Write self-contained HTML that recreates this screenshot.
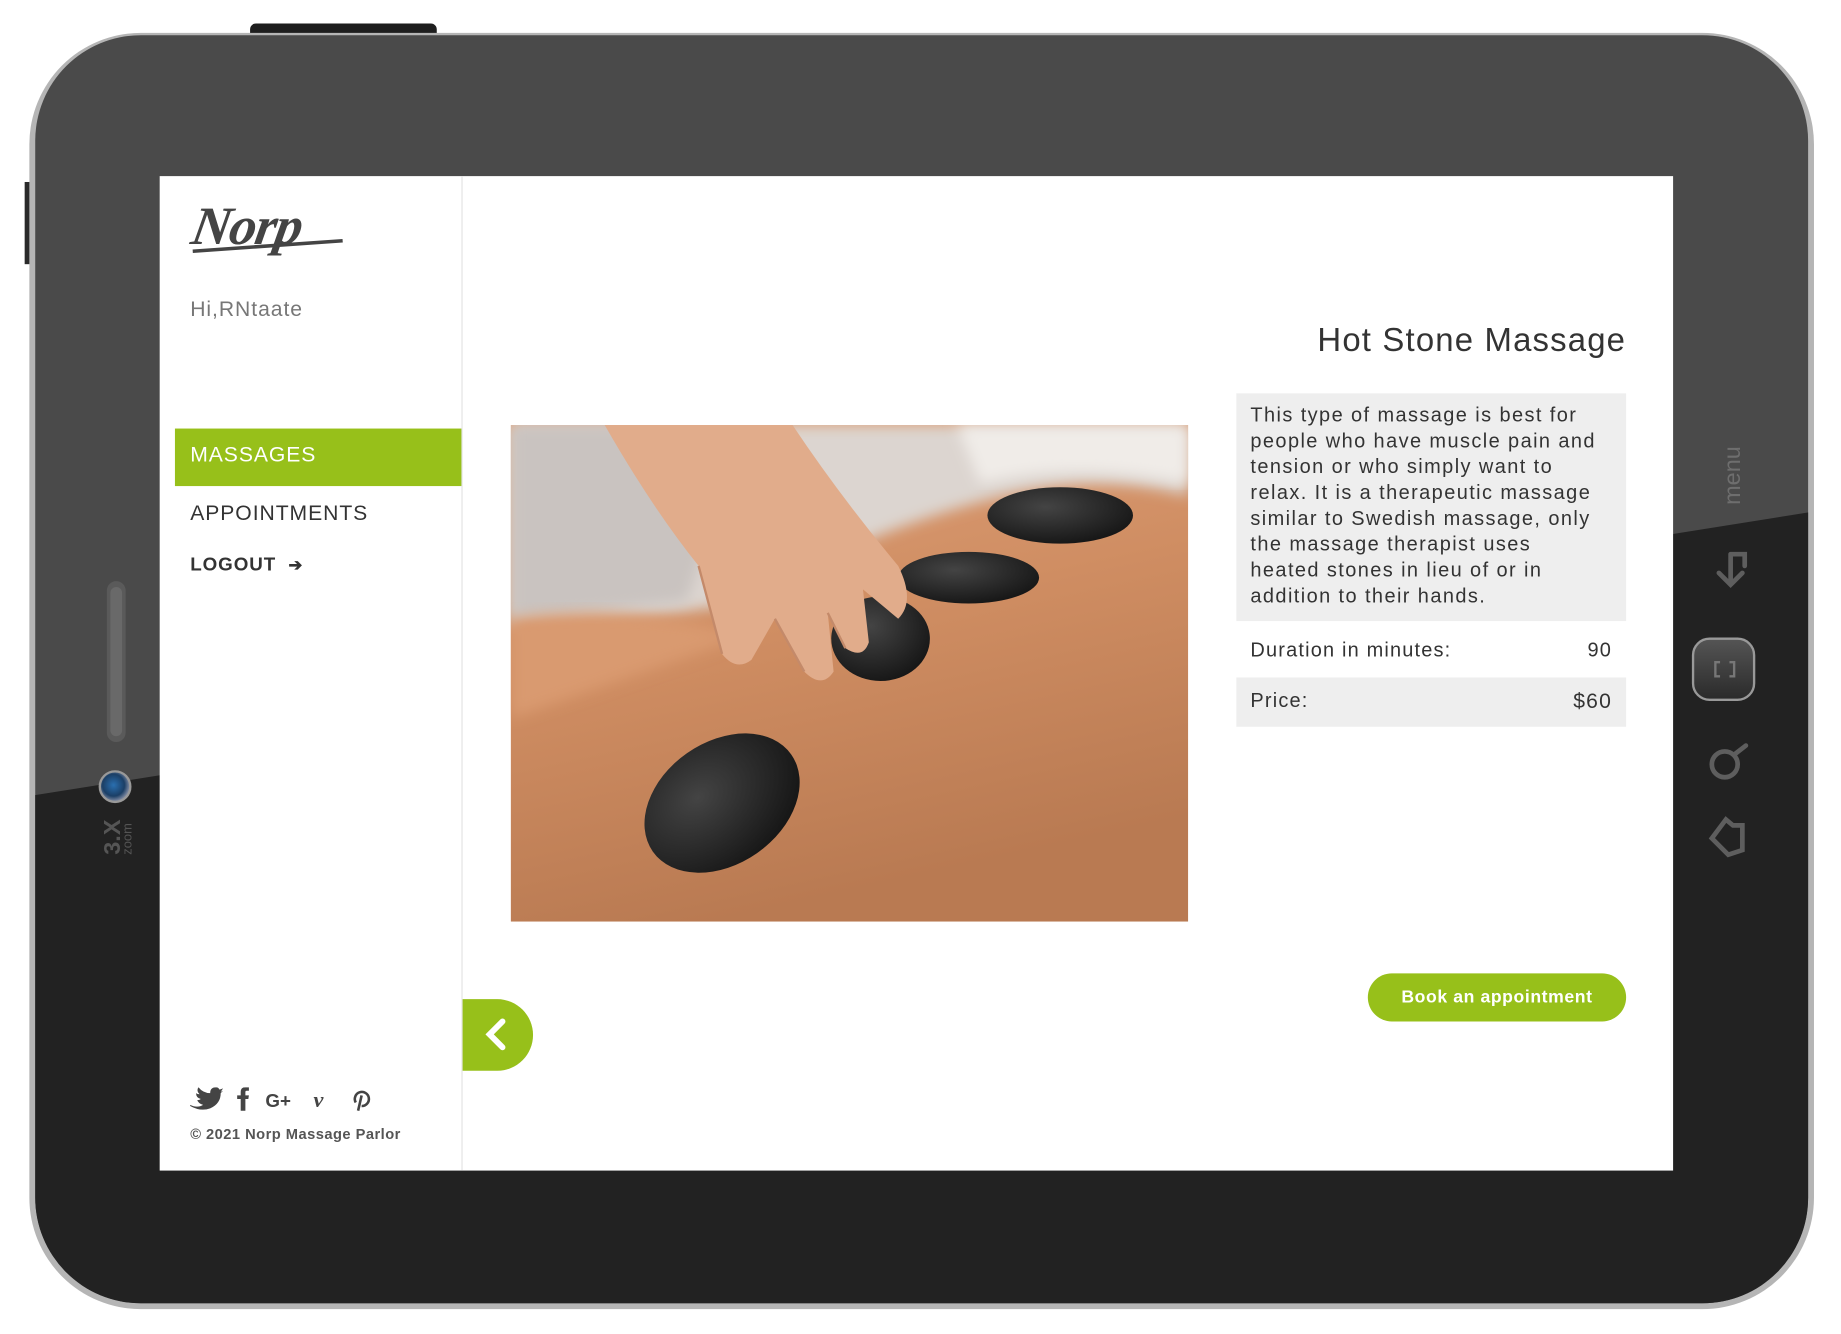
<!DOCTYPE html>
<html><head><meta charset="utf-8"><style>
html,body{margin:0;padding:0;background:#fff;width:1841px;height:1334px;overflow:hidden}
#w{position:absolute;left:0;top:0;width:1568px;height:1136px;transform:scale(1.1741);transform-origin:0 0;font-family:"Liberation Sans",sans-serif}
.a{position:absolute}
.screen{left:136px;top:150px;width:1289px;height:847px;background:#fff}
.side{left:0;top:0;width:257px;height:847px;border-right:1px solid #e3e3e3}
.nav{font-size:18px;letter-spacing:.8px;color:#333}
.box{background:#eee}
.desc div{white-space:nowrap}
</style></head><body><div id="w">
<svg class="a" style="left:0;top:0" width="1568" height="1136">
<defs><clipPath id="bc"><rect x="30" y="30" width="1510" height="1080" rx="90"/></clipPath>
<radialGradient id="cam" cx=".45" cy=".45" r=".6"><stop offset="0" stop-color="#2a6fb0"/><stop offset=".6" stop-color="#1b3f66"/><stop offset="1" stop-color="#aab"/></radialGradient>
<linearGradient id="hb" x1="0" y1="0" x2="0" y2="1"><stop offset="0" stop-color="#555"/><stop offset="1" stop-color="#2a2a2a"/></linearGradient></defs>
<rect x="213" y="20" width="159" height="14" rx="5" fill="#1e1e1e"/>
<rect x="21" y="155" width="8" height="70" fill="#2a2a2a"/>
<rect x="25" y="28" width="1520" height="1087" rx="95" fill="#b5b5b5"/>
<g clip-path="url(#bc)">
<rect x="0" y="0" width="1568" height="1136" fill="#4a4a4a"/>
<polygon points="0,682 1568,432 1568,1136 0,1136" fill="#222"/>
</g>
<rect x="91" y="495" width="16" height="137" rx="8" fill="#5a5a5a"/>
<rect x="94" y="500" width="10" height="127" rx="5" fill="#777" opacity=".5"/>
<circle cx="98" cy="670" r="13" fill="url(#cam)" stroke="#999" stroke-width="2"/>
<text transform="translate(102,728) rotate(-90)" font-size="20" font-weight="bold" fill="#555" font-family="Liberation Sans">3.X</text>
<text transform="translate(112,728) rotate(-90)" font-size="11" fill="#555" font-family="Liberation Sans">zoom</text>
<text transform="translate(1482,430) rotate(-90)" font-size="20" fill="#6e6e6e" font-family="Liberation Sans">menu</text>
<g stroke="#5e5e5e" stroke-width="4" fill="none" stroke-linecap="round">
<path d="M1474,472 h12 v10 M1474,472 v26 M1464,488 l10,10 l10,-10"/>
<circle cx="1469" cy="651" r="11"/><path d="M1478,642 l9,-7"/>
<path d="M1484,703 l-8,0 l-6,-5 l-12,16 l14,14 l12,-4 z"/>
</g>
<rect x="1442" y="544" width="52" height="52" rx="14" fill="url(#hb)" stroke="#999" stroke-width="2"/>
<path d="M1465,564 h-4 v12 h4 M1473,564 h4 v12 h-4" stroke="#777" stroke-width="2" fill="none"/>
</svg>
<div class="a screen">
 <div class="a side">
  <div class="a" style="left:28px;top:16px;font-family:'Liberation Serif',serif;font-style:italic;font-weight:bold;font-size:46px;color:#444;letter-spacing:-1px;transform:skewX(-10deg)">Norp</div>
  <div class="a" style="left:28px;top:58px;width:128px;height:3px;background:#444;transform:rotate(-4deg)"></div>
  <div class="a" style="left:26px;top:103px;font-size:18px;color:#777;letter-spacing:.8px">Hi,RNtaate</div>
  <div class="a" style="left:13px;top:215px;width:244px;height:49px;background:#97c01a"></div>
  <div class="a nav" style="left:26px;top:227px;color:#fff">MASSAGES</div>
  <div class="a nav" style="left:26px;top:277px">APPOINTMENTS</div>
  <div class="a nav" style="left:26px;top:323px;font-size:16px;font-weight:bold">LOGOUT &nbsp;<span style="font-size:14px">&#x2794;</span></div>
  <svg class="a" style="left:25px;top:776px" width="160" height="22">
   <path d="M1,15 q6,3 11,0 q-4,-1 -5,-4 q2,0 3,-1 q-4,-1 -4,-5 q1,1 3,1 q-3,-3 -1,-6 q4,5 10,5 q0,-5 5,-5 q2,0 3,2 l3,-1 l-2,3 l2,-1 l-2,2 q0,9 -9,13 q-8,3 -17,-2z" fill="#444"/>
   <path d="M44,20 v-10 h-3 v-3 h3 v-3 q0,-4 4,-4 h3 v3 h-2 q-1,0 -1,1 v3 h3 l-.5,3 h-2.5 v10z" fill="#444"/>
   <text x="65" y="17" font-size="16" font-weight="bold" fill="#444" font-family="Liberation Sans">G+</text>
   <text x="106" y="17" font-size="19" font-weight="bold" font-style="italic" fill="#444" font-family="Liberation Serif">v</text>
   <path d="M144,20 l3,-13 M142,13 a6,6 0 1 1 5,3" stroke="#444" stroke-width="2.2" fill="none"/>
  </svg>
  <div class="a" style="left:26px;top:809px;font-size:12.5px;color:#555;letter-spacing:.4px;font-weight:bold">© 2021 Norp Massage Parlor</div>
 </div>
 <div class="a" style="right:40px;top:124px;font-size:28px;color:#333;letter-spacing:1px">Hot Stone Massage</div>
 <div class="a box desc" style="left:917px;top:185px;width:308px;height:178px;padding:8px 12px;font-size:17px;line-height:22px;color:#333;letter-spacing:1.2px">
 <div>This type of massage is best for</div><div>people who have muscle pain and</div><div>tension or who simply want to</div><div>relax. It is a therapeutic massage</div><div>similar to Swedish massage, only</div><div>the massage therapist uses</div><div>heated stones in lieu of or in</div><div>addition to their hands.</div></div>
 <div class="a" style="left:929px;top:394px;width:308px;font-size:17px;color:#333;letter-spacing:1px">Duration in minutes:<span style="position:absolute;right:0">90</span></div>
 <div class="a box" style="left:917px;top:427px;width:332px;height:42px"></div>
 <div class="a" style="left:929px;top:437px;width:308px;font-size:17px;color:#333;letter-spacing:1px">Price:<span style="position:absolute;right:0;font-size:18px">$60</span></div>
 <svg class="a" style="left:299px;top:212px" width="577" height="423" viewBox="0 0 577 423">
  <defs>
   <linearGradient id="sk" x1="0" y1="0" x2=".3" y2="1"><stop offset="0" stop-color="#e0a27a"/><stop offset=".5" stop-color="#cf8d62"/><stop offset="1" stop-color="#b97a52"/></linearGradient>
   <radialGradient id="st" cx=".4" cy=".35" r=".7"><stop offset="0" stop-color="#444"/><stop offset="1" stop-color="#151515"/></radialGradient>
   <filter id="bl"><feGaussianBlur stdDeviation="6"/></filter>
  </defs>
  <rect width="577" height="423" fill="url(#sk)"/>
  <path d="M0,0 H577 V60 Q500,40 420,60 Q300,90 200,150 Q100,170 0,170 Z" fill="#dcd5d0" filter="url(#bl)"/>
  <path d="M0,0 H200 L150,150 Q60,160 0,165 Z" fill="#c9c3c0" filter="url(#bl)"/>
  <path d="M0,165 Q100,150 200,180 L0,250 Z" fill="#d99a70" filter="url(#bl)"/>
  <path d="M380,0 H577 V50 Q480,30 400,50 Z" fill="#f0ece8" filter="url(#bl)"/>
  <ellipse cx="468" cy="77" rx="62" ry="24" fill="url(#st)"/>
  <ellipse cx="390" cy="130" rx="60" ry="22" fill="url(#st)"/>
  <ellipse cx="315" cy="182" rx="42" ry="36" fill="url(#st)"/>
  <ellipse cx="180" cy="322" rx="72" ry="52" transform="rotate(-35 180 322)" fill="url(#st)"/>
  <path d="M80,0 L240,0 Q280,60 330,120 Q345,150 330,165 L300,140 L305,185 Q300,200 285,190 L270,160 L275,210 Q265,225 250,210 L225,165 L205,200 Q192,210 180,195 L160,120 Q120,70 80,0 Z" fill="#e1ac8b"/>
  <path d="M160,120 L180,195 M225,165 L250,210 M270,160 L285,190" stroke="#c48a6a" stroke-width="2" fill="none"/>
 </svg>
 <div class="a" style="left:258px;top:701px;width:60px;height:61px;background:#97c01a;border-radius:0 31px 31px 0"></div>
 <svg class="a" style="left:272px;top:716px" width="30" height="30"><path d="M20,4 L9,15 L20,26" stroke="#fff" stroke-width="5" fill="none" stroke-linecap="round"/></svg>
 <div class="a" style="left:1029px;top:679px;width:220px;height:41px;background:#97c01a;border-radius:21px;color:#fff;font-size:15px;font-weight:bold;text-align:center;line-height:41px;letter-spacing:.5px">Book an appointment</div>
</div>
</div></body></html>
